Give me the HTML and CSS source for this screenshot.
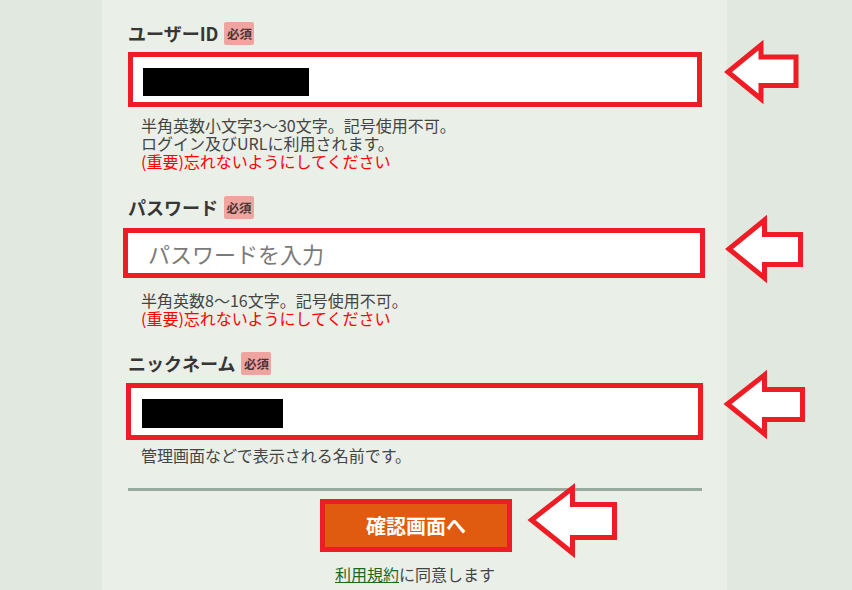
FILE: index.html
```html
<!DOCTYPE html>
<html lang="ja">
<head>
<meta charset="utf-8">
<title>登録</title>
<link rel="stylesheet" href="styles.css">
</head>
<body>
<div class="page">
  <div class="panel">
    <div class="field">
      <div class="label-row"><span class="label">ユーザーID</span><span class="badge">必須</span></div>
      <div class="box box-user"><span class="redact redact-user"></span></div>
      <div class="help">
        <div class="line">半角英数小文字3〜30文字。記号使用不可。</div>
        <div class="line">ログイン及びURLに利用されます。</div>
        <div class="line warn">(重要)忘れないようにしてください</div>
      </div>
    </div>
    <div class="field field-pass">
      <div class="label-row"><span class="label">パスワード</span><span class="badge">必須</span></div>
      <div class="box box-pass"><span class="placeholder">パスワードを入力</span></div>
      <div class="help help-pass">
        <div class="line">半角英数8〜16文字。記号使用不可。</div>
        <div class="line warn">(重要)忘れないようにしてください</div>
      </div>
    </div>
    <div class="field field-nick">
      <div class="label-row"><span class="label">ニックネーム</span><span class="badge">必須</span></div>
      <div class="box box-nick"><span class="redact redact-nick"></span></div>
      <div class="help help-nick">
        <div class="line">管理画面などで表示される名前です。</div>
      </div>
    </div>
    <div class="divider"></div>
    <div class="actions">
      <button class="submit" type="button">確認画面へ</button>
    </div>
    <p class="agree"><a class="terms" href="#">利用規約</a>に同意します</p>
  </div>
  <svg class="arrows" width="852" height="590" viewBox="0 0 852 590" xmlns="http://www.w3.org/2000/svg">
    <g fill="#ffffff" stroke="#ee1c25" stroke-width="5" stroke-linejoin="miter">
      <polygon points="728,72 761,45 761,57 796,57 796,85.5 761,85.5 761,99"/>
      <polygon points="729,249 764.5,220 764.5,234.5 800.5,234.5 800.5,264.5 764.5,264.5 764.5,278"/>
      <polygon points="727.5,404 764.5,375 764.5,389.5 802.5,389.5 802.5,419.5 764.5,419.5 764.5,434"/>
      <polygon points="531.5,520 572.5,488 572.5,504.5 614.5,504.5 614.5,537.5 572.5,537.5 572.5,553"/>
    </g>
  </svg>
</div>
</body>
</html>
```

FILE: styles.css
```css
html, body {
  margin: 0;
  padding: 0;
}

body {
  background: #e1e8df;
  font-family: "Noto Sans CJK JP", "Noto Sans", sans-serif;
  color: #444;
}

.page {
  position: relative;
  width: 852px;
  height: 590px;
  overflow: hidden;
}

.panel {
  margin-left: 102px;
  width: 625px;
  height: 590px;
  box-sizing: border-box;
  background: #eaefe8;
  padding: 21px 25px 0 26px;
}

.label-row {
  display: flex;
  align-items: center;
  height: 24px;
}

.label {
  font-size: 18px;
  font-weight: 700;
  line-height: 24px;
  color: #363636;
}

.badge {
  margin-left: 6px;
  width: 30px;
  height: 23px;
  border-radius: 2px;
  background: #efa4a0;
  color: #4a3434;
  font-size: 12.5px;
  font-weight: 700;
  line-height: 23px;
  display: flex;
  align-items: center;
  justify-content: center;
}

.box {
  margin-top: 7px;
  height: 55px;
  box-sizing: border-box;
  border: 5px solid #ee1c25;
  background: #fff;
  padding: 11px 0 0 10px;
}

.redact {
  display: block;
  background: #000;
}

.redact-user {
  width: 166px;
  height: 28px;
}

.redact-nick {
  width: 141px;
  height: 29px;
}

.help {
  margin-top: 9px;
  padding-left: 13px;
  font-size: 16px;
  line-height: 18px;
  color: #444;
}

.line {
  height: 18px;
}

.warn {
  color: #ff0000;
}

.field-pass {
  margin-top: 25px;
}

.box-pass {
  margin: 9px -3px 0 -5px;
  height: 50px;
  padding: 0 0 0 20px;
  display: flex;
  align-items: center;
}

.placeholder {
  font-size: 22px;
  line-height: 30px;
  color: #7a7a7a;
}

.help-pass {
  margin-top: 13px;
}

.field-nick {
  margin-top: 24px;
}

.box-nick {
  margin: 8px -1px 0 -2px;
  height: 57px;
  padding: 11px 0 0 11px;
}

.help-nick {
  margin-top: 6px;
}

.divider {
  margin-top: 24px;
  height: 3px;
  background: #98ab9c;
}

.actions {
  margin-top: 8px;
  display: flex;
  justify-content: center;
}

.submit {
  width: 192px;
  height: 53px;
  box-sizing: border-box;
  border: 5px solid #ee1c25;
  background: #e05a0f;
  color: #fff;
  font-family: "Noto Sans CJK JP", "Noto Sans", sans-serif;
  font-size: 20px;
  font-weight: 700;
  padding: 0;
  margin-left: 2px;
}

.agree {
  margin: 13px 0 0;
  text-align: center;
  font-size: 16px;
  line-height: 18px;
  color: #444;
}

.terms {
  color: #1d6a1d;
  text-decoration: underline;
}

.arrows {
  position: absolute;
  left: 0;
  top: 0;
}
```
